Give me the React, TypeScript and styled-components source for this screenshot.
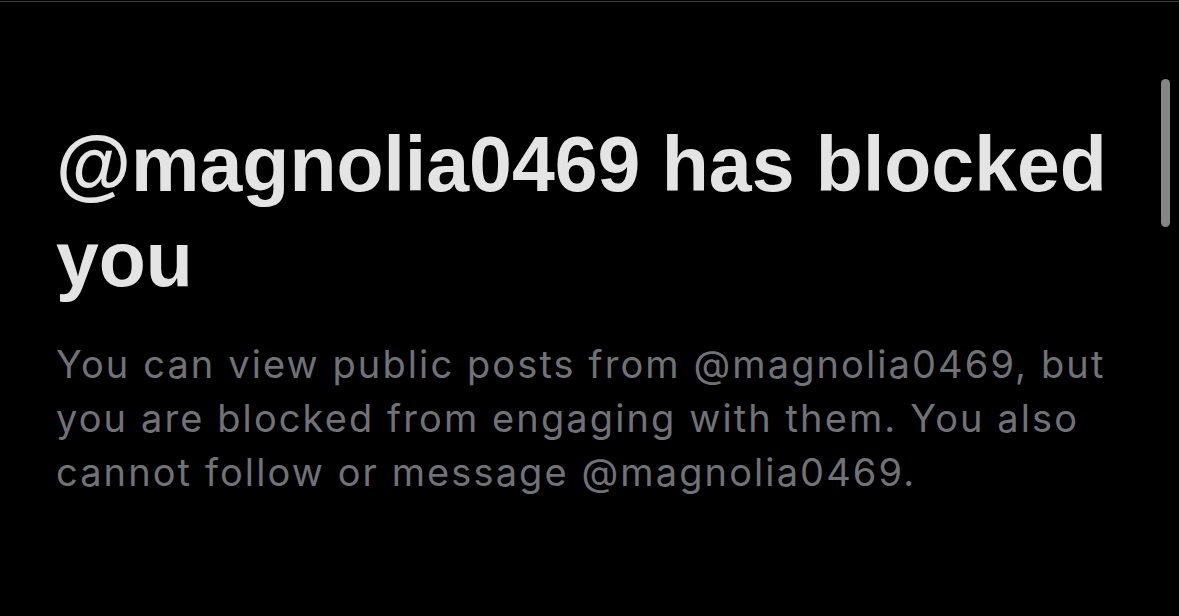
import React from "react";
import styled, { createGlobalStyle } from "styled-components";

const Global = createGlobalStyle`
  html, body {
    margin: 0;
    padding: 0;
    background: #000;
  }
  #root {
    min-height: 616px;
  }
`;

const Screen = styled.div`
  position: relative;
  width: 1179px;
  height: 616px;
  box-sizing: border-box;
  background: #000;
  border-top: 1px solid #000;
  overflow: hidden;
`;

const TopRule = styled.div`
  height: 1px;
  background: #3b3b40;
`;

const Content = styled.div`
  display: flex;
  flex-direction: column;
  gap: 30px;
  padding: 115px 50px 0 56px;
`;

const Title = styled.h1`
  margin: 0;
  font-family: "Liberation Sans", Arial, sans-serif;
  font-weight: 700;
  font-size: 77px;
  line-height: 95px;
  color: #e4e4e4;
  letter-spacing: 0;
`;

const Body = styled.p`
  margin: 0;
  font-family: Inter, "Noto Sans", sans-serif;
  font-weight: 400;
  font-size: 38px;
  line-height: 54px;
  letter-spacing: 2.1px;
  color: #707277;
`;

const ScrollThumb = styled.div`
  position: absolute;
  top: 78px;
  left: 1161px;
  width: 9px;
  height: 148px;
  border-radius: 5px;
  background: #868686;
`;

export default function App() {
  return (
    <>
      <Global />
      <Screen>
        <TopRule />
        <Content>
          <Title>@magnolia0469 has blocked you</Title>
          <Body>
            You can view public posts from @magnolia0469, but you are blocked
            from engaging with them. You also cannot follow or message
            @magnolia0469.
          </Body>
        </Content>
        <ScrollThumb />
      </Screen>
    </>
  );
}
